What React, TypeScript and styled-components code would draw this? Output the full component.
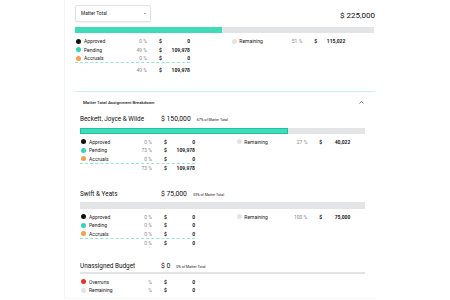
import { FC } from 'react'
import styled, { createGlobalStyle, css } from 'styled-components'

const GlobalStyle = createGlobalStyle`
  body {
    margin: 0;
    background: #ffffff;
    font-family: Roboto, "Liberation Sans", sans-serif;
    color: #222;
  }
`

const Page = styled.div`
  width: 450px;
  height: 300px;
  overflow: hidden;
`

const Card = styled.div`
  margin-left: 64px;
  width: 300px;
  padding: 5px 0 0 10px;
  border-left: 1px solid #f4f4f4;
  border-bottom: 1px dotted #eef2f1;
  height: 293px;
`

const Header = styled.div`
  display: flex;
  align-items: center;
  justify-content: space-between;
`

const Select = styled.div`
  box-sizing: border-box;
  width: 76px;
  height: 17px;
  display: flex;
  align-items: center;
  justify-content: space-between;
  padding: 0 4px 0 5px;
  border: 1px solid #e2e2e2;
  border-radius: 2px;
  box-shadow: 0 1px 2px rgba(0, 0, 0, 0.06);
  font-size: 4.8px;
  color: #222;
`

const Caret = styled.span`
  width: 0;
  height: 0;
  border-left: 1.5px solid transparent;
  border-right: 1.5px solid transparent;
  border-top: 1.5px solid #555;
`

const GrandTotal = styled.div`
  font-size: 8px;
  color: #111;
  padding-top: 3px;
`

const Bar = styled.div<{ thin?: boolean }>`
  position: relative;
  height: ${({ thin }) => (thin ? '2px' : '6.5px')};
  background: #e3e4e6;
  overflow: hidden;
`

const Fill = styled.div<{ outlined?: boolean }>`
  height: 100%;
  box-sizing: border-box;
  background: #40dcb9;
  ${({ outlined }) =>
    outlined &&
    css`
      border: 1px solid #1fc29e;
    `}
`

const MainBar = styled(Bar)`
  margin-top: 5px;
  width: 299px;
  height: 6px;
`

const Legend = styled.div<{ indent: number; top: number }>`
  display: flex;
  gap: 41.8px;
  padding-left: ${({ indent }) => indent}px;
  margin-top: ${({ top }) => top}px;
`

const Column = styled.div`
  display: flex;
  flex-direction: column;
`

const Row = styled.div<{ underline?: boolean; spaced?: boolean }>`
  display: grid;
  grid-template-columns: 7.5px 39.5px 23.5px 12px 10px 21px;
  align-items: center;
  height: 8.5px;
  font-size: 5px;
  ${({ underline }) =>
    underline &&
    css`
      border-bottom: 1px dashed #8fe8d5;
      margin-left: -1.5px;
      padding-left: 1.5px;
      height: 8px;
    `}
  ${({ spaced }) =>
    spaced &&
    css`
      margin-top: 3px;
    `}
`

const Dot = styled.span<{ color: string }>`
  width: 5px;
  height: 5px;
  margin-left: -0.25px;
  border-radius: 50%;
  background: ${({ color }) => color};
`

const Label = styled.span`
  grid-column: 2;
  color: #1a1a1a;
  white-space: nowrap;
`

const Pct = styled.span`
  grid-column: 3;
  text-align: right;
  color: #8a8a8a;
  white-space: nowrap;
`

const Dollar = styled.span`
  grid-column: 5;
  font-weight: 700;
`

const Value = styled.span`
  grid-column: 6;
  text-align: right;
  font-weight: 700;
  white-space: nowrap;
`

const Divider = styled.div`
  margin-top: 16px;
  height: 1px;
  background: #c9f3e8;
`

const BreakdownHeader = styled.div`
  display: flex;
  align-items: center;
  justify-content: space-between;
  padding: 6px 11px 0 8px;
  height: 9px;
  font-size: 4.4px;
  font-weight: 500;
  color: #222;
`

const Section = styled.div<{ gap: number }>`
  padding-left: 5px;
  width: 285px;
  margin-top: ${({ gap }) => gap}px;
`

const SectionHead = styled.div`
  display: flex;
  align-items: baseline;
  height: 10px;
`

const Name = styled.span`
  width: 81px;
  font-size: 6.4px;
  color: #111;
`

const Amount = styled.span`
  font-size: 6.8px;
  color: #111;
  margin-right: 6px;
`

const Share = styled.span`
  font-size: 3.6px;
  color: #222;
`

const SectionBar = styled.div<{ gap: number }>`
  margin-top: ${({ gap }) => gap}px;
`

type Item = { label: string; color: string; pct: string; value: string }

type LegendProps = {
  items: Item[]
  totalPct?: string
  totalValue?: string
  remaining?: Item
  indent: number
  top: number
  spacedTotal?: boolean
}

const LegendBlock: FC<LegendProps> = ({ items, totalPct, totalValue, remaining, indent, top, spacedTotal }) => (
  <Legend indent={indent} top={top}>
    <Column>
      {items.map((item, i) => (
        <Row key={item.label} underline={totalPct !== undefined && i === items.length - 1}>
          <Dot color={item.color} />
          <Label>{item.label}</Label>
          <Pct>{item.pct}</Pct>
          <Dollar>$</Dollar>
          <Value>{item.value}</Value>
        </Row>
      ))}
      {totalPct !== undefined && (
        <Row spaced={spacedTotal}>
          <Pct>{totalPct}</Pct>
          <Dollar>$</Dollar>
          <Value>{totalValue}</Value>
        </Row>
      )}
    </Column>
    {remaining && (
      <Column>
        <Row>
          <Dot color={remaining.color} />
          <Label>{remaining.label}</Label>
          <Pct>{remaining.pct}</Pct>
          <Dollar>$</Dollar>
          <Value>{remaining.value}</Value>
        </Row>
      </Column>
    )}
  </Legend>
)

const BLACK = '#111'
const TEAL = '#2fd6b2'
const ORANGE = '#f3a04f'
const GREY = '#e3e3e3'
const RED = '#e8321f'

const baseItems = (approved: string, pending: string, accruals: string, value: string): Item[] => [
  { label: 'Approved', color: BLACK, pct: approved, value: '0' },
  { label: 'Pending', color: TEAL, pct: pending, value },
  { label: 'Accruals', color: ORANGE, pct: accruals, value: '0' },
]

const ChevronUp = () => (
  <svg width="5" height="3" viewBox="0 0 10 6">
    <polyline points="1,5 5,1 9,5" fill="none" stroke="#444" strokeWidth="1.4" />
  </svg>
)

const App: FC = () => {
  return (
    <Page>
      <GlobalStyle />
      <Card>
        <Header>
          <Select>
            Matter Total
            <Caret />
          </Select>
          <GrandTotal>$ 225,000</GrandTotal>
        </Header>
        <MainBar>
          <Fill style={{ width: '49%' }} />
        </MainBar>
        <LegendBlock
          indent={1.5}
          top={4}
          spacedTotal
          items={[
            { label: 'Approved', color: BLACK, pct: '0 %', value: '0' },
            { label: 'Pending', color: TEAL, pct: '49 %', value: '109,978' },
            { label: 'Accruals', color: ORANGE, pct: '0 %', value: '0' },
          ]}
          totalPct="49 %"
          totalValue="109,978"
          remaining={{ label: 'Remaining', color: GREY, pct: '51 %', value: '115,022' }}
        />
        <Divider />
        <BreakdownHeader>
          Matter Total Assignment Breakdown
          <ChevronUp />
        </BreakdownHeader>

        <Section gap={8.5}>
          <SectionHead>
            <Name>Beckett, Joyce &amp; Wilde</Name>
            <Amount>$ 150,000</Amount>
            <Share>67% of Matter Total</Share>
          </SectionHead>
          <SectionBar gap={2.5}>
            <Bar>
              <Fill outlined style={{ width: '73%' }} />
            </Bar>
          </SectionBar>
        </Section>
        <LegendBlock
          indent={6.5}
          top={3.7}
          items={baseItems('0 %', '73 %', '0 %', '109,978')}
          totalPct="73 %"
          totalValue="109,978"
          remaining={{ label: 'Remaining', color: GREY, pct: '27 %', value: '40,022' }}
        />

        <Section gap={18}>
          <SectionHead>
            <Name>Swift &amp; Yeats</Name>
            <Amount>$ 75,000</Amount>
            <Share>33% of Matter Total</Share>
          </SectionHead>
          <SectionBar gap={2}>
            <Bar />
          </SectionBar>
        </Section>
        <LegendBlock
          indent={6.5}
          top={4}
          items={baseItems('0 %', '0 %', '0 %', '0')}
          totalPct="0 %"
          totalValue="0"
          remaining={{ label: 'Remaining', color: GREY, pct: '100 %', value: '75,000' }}
        />

        <Section gap={14.5}>
          <SectionHead>
            <Name>Unassigned Budget</Name>
            <Amount>$ 0</Amount>
            <Share>0% of Matter Total</Share>
          </SectionHead>
          <SectionBar gap={0}>
            <Bar thin />
          </SectionBar>
        </Section>
        <LegendBlock
          indent={6.5}
          top={4}
          items={[
            { label: 'Overruns', color: RED, pct: '%', value: '0' },
            { label: 'Remaining', color: GREY, pct: '%', value: '0' },
          ]}
        />
      </Card>
    </Page>
  )
}

export default App
